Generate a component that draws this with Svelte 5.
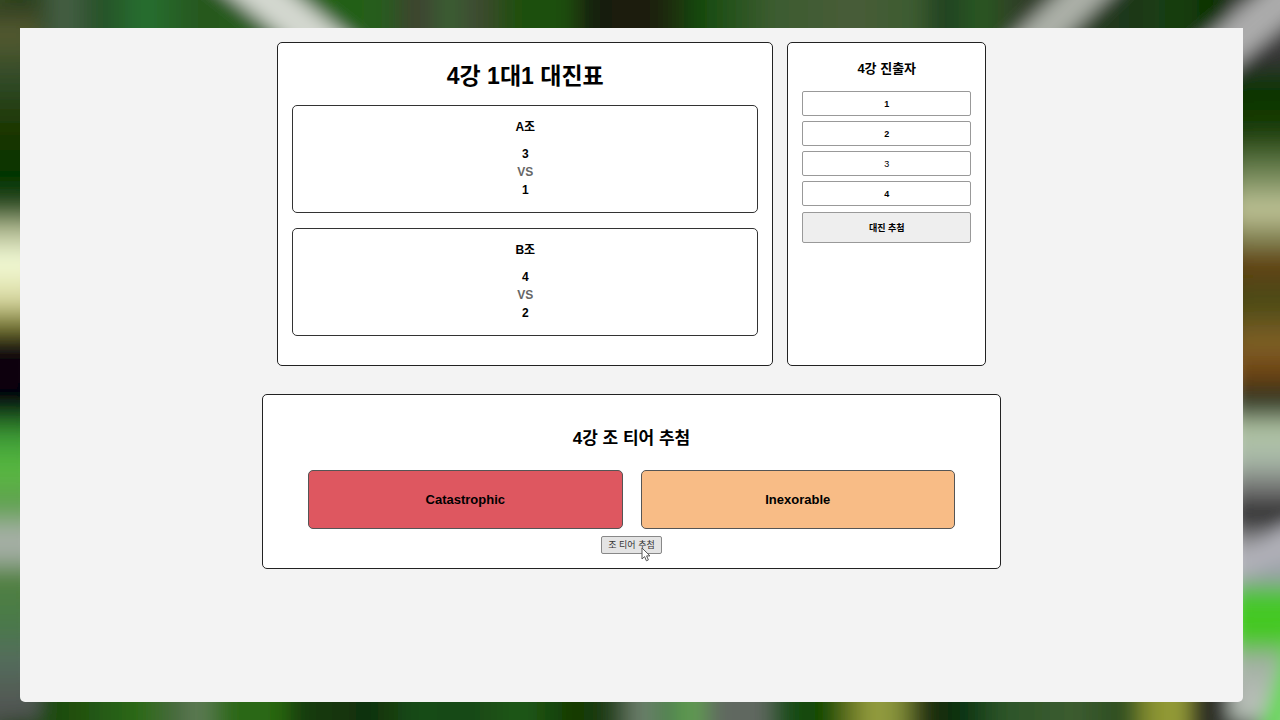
<script>
	// 4강 draw board: bracket, qualifiers and tier draw
	let players = $state([
		{ id: 1, name: '1', confirmed: true },
		{ id: 2, name: '2', confirmed: true },
		{ id: 3, name: '3', confirmed: false },
		{ id: 4, name: '4', confirmed: true }
	]);

	let groups = $state([
		{ title: 'A조', first: '3', second: '1' },
		{ title: 'B조', first: '4', second: '2' }
	]);

	let tiers = $state([
		{ name: 'Catastrophic', style: 'red' },
		{ name: 'Inexorable', style: 'orange' }
	]);

	// Backdrop colours as [position, colour] along each side
	const top = [
		[0, '#303818'], [20, '#506028'], [55, '#203c10'], [98, '#486048'], [130, '#285028'], [175, '#287030'],
		[220, '#285820'], [350, '#206010'], [400, '#285c20'], [430, '#404030'], [460, '#386030'], [485, '#404a34'],
		[530, '#1c5008'], [570, '#205008'], [592, '#182008'], [650, '#1c1c08'], [700, '#184c10'], [765, '#3c5c30'],
		[840, '#485c38'], [900, '#3c5c30'], [925, '#204020'], [960, '#2a5820'], [1000, '#303c28'], [1110, '#1c3818'],
		[1140, '#184010'], [1185, '#0c3000'], [1210, '#202c18'], [1280, '#303030']
	];
	const bottom = [
		[0, '#505050'], [30, '#405040'], [50, '#1c4010'], [110, '#205010'], [170, '#2c6a18'], [205, '#4a6a40'],
		[225, '#607c58'], [255, '#2c6818'], [300, '#286810'], [320, '#183c10'], [385, '#103008'], [430, '#184c18'],
		[480, '#184818'], [530, '#205818'], [580, '#103800'], [610, '#203c18'], [640, '#708070'], [665, '#508050'],
		[690, '#60a050'], [715, '#606860'], [755, '#606860'], [778, '#184c18'], [812, '#104800'], [835, '#607020'],
		[860, '#98a040'], [885, '#808c38'], [910, '#202c10'], [940, '#083010'], [980, '#2c5428'], [1050, '#3c5c30'],
		[1095, '#2c4c20'], [1120, '#889030'], [1150, '#98a038'], [1168, '#282820'], [1205, '#383c38'],
		[1240, '#c0c4c0'], [1262, '#b0c0b0'], [1280, '#60c050']
	];
	const left = [
		[0, '#2a3a20'], [33, '#555a30'], [80, '#304a28'], [130, '#1c3600'], [180, '#003400'], [203, '#2a4a20'],
		[230, '#b0b890'], [262, '#f4fcd8'], [300, '#d8d8a0'], [328, '#70702a'], [350, '#0a0510'], [400, '#050010'],
		[418, '#206020'], [440, '#40a038'], [470, '#58b840'], [505, '#60a050'], [535, '#a8b0a8'], [555, '#a0aca0'],
		[580, '#508040'], [620, '#4a7a48'], [660, '#546c5c'], [720, '#505050']
	];
	const right = [
		[0, '#505050'], [60, '#333333'], [90, '#083400'], [130, '#1a3c08'], [170, '#6a8050'], [210, '#c0c498'],
		[240, '#808050'], [265, '#604010'], [300, '#4a4a14'], [345, '#806028'], [375, '#6a4010'], [400, '#2e3420'],
		[430, '#b0c4a4'], [460, '#a8b8a8'], [490, '#707070'], [515, '#282828'], [550, '#b0b0b4'], [575, '#9a9faa'],
		[600, '#44c828'], [635, '#44c820'], [660, '#a0b0a0'], [700, '#b8bcb8'], [720, '#b0c0b0']
	];

	function shuffle(list) {
		return list
			.map((item) => ({ item, order: Math.random() }))
			.sort((a, b) => a.order - b.order)
			.map((entry) => entry.item);
	}

	function drawMatches() {
		const names = shuffle(players.map((player) => player.name));
		groups.forEach((group, i) => {
			group.first = names[i * 2];
			group.second = names[i * 2 + 1];
		});
	}

	function drawTiers() {
		tiers = shuffle(tiers);
	}
</script>

{#snippet gradient(id, stops, length, vertical)}
	<linearGradient {id} x1="0" y1="0" x2={vertical ? 0 : 1} y2={vertical ? 1 : 0}>
		{#each stops as [position, color]}
			<stop offset={position / length} stop-color={color} />
		{/each}
	</linearGradient>
{/snippet}

<div class="page">
	<svg class="backdrop" viewBox="0 0 1280 720" preserveAspectRatio="none" aria-hidden="true">
		<defs>
			{@render gradient('side-top', top, 1280, false)}
			{@render gradient('side-bottom', bottom, 1280, false)}
			{@render gradient('side-left', left, 720, true)}
			{@render gradient('side-right', right, 720, true)}
			<filter id="soft" filterUnits="userSpaceOnUse" x="-60" y="-60" width="1400" height="840">
				<feGaussianBlur stdDeviation="9" />
			</filter>
		</defs>
		<g filter="url(#soft)">
			<rect x="-40" y="-40" width="1360" height="400" fill="url(#side-top)" />
			<rect x="-40" y="680" width="1360" height="80" fill="url(#side-bottom)" />
			<rect x="-40" y="0" width="80" height="720" fill="url(#side-left)" />
			<rect x="1230" y="0" width="90" height="720" fill="url(#side-right)" />
			<path d="M218 -40 L345 60" stroke="#d4d8d0" stroke-width="40" />
			<path d="M1120 -40 L1015 60" stroke="#acb0a8" stroke-width="36" />
			<path d="M1330 -40 L1205 65" stroke="#acacac" stroke-width="40" />
			<path d="M1300 530 L1235 572" stroke="#b0b0b8" stroke-width="24" />
			<path d="M1270 740 L1300 640" stroke="#60d850" stroke-width="24" />
		</g>
	</svg>

	<main>
		<div class="top-row">
			<section class="panel bracket">
				<h1>4강 1대1 대진표</h1>
				{#each groups as group (group.title)}
					<article class="group">
						<h2>{group.title}</h2>
						<p>{group.first}</p>
						<p class="versus">VS</p>
						<p>{group.second}</p>
					</article>
				{/each}
			</section>

			<section class="panel qualifiers">
				<h2>4강 진출자</h2>
				{#each players as player (player.id)}
					<input
						type="text"
						class:pending={!player.confirmed}
						aria-label="진출자 {player.id}"
						bind:value={player.name}
					/>
				{/each}
				<button type="button" class="match-btn" onclick={drawMatches}>대진 추첨</button>
			</section>
		</div>

		<section class="panel tier-panel">
			<h2>4강 조 티어 추첨</h2>
			<div class="tiers">
				{#each tiers as tier (tier.name)}
					<div class="tier {tier.style}">{tier.name}</div>
				{/each}
			</div>
			<button type="button" class="tier-btn" onclick={drawTiers}>
				조 티어 추첨
				<svg class="cursor" viewBox="0 0 10 15" aria-hidden="true">
					<path d="M1 1 V12 L3.600 9.600 L5.400 13.800 L7.400 12.900 L5.600 8.900 H9 Z" />
				</svg>
			</button>
		</section>
	</main>
</div>

<style>
	:global(body) {
		margin: 0;
	}

	.page {
		position: relative;
		box-sizing: border-box;
		display: flex;
		min-height: 100vh;
		padding: 28px 37px 18px 20px;
		font-family: 'Liberation Sans', 'Noto Sans CJK KR', sans-serif;
		color: #000;
	}

	.backdrop {
		position: absolute;
		inset: 0;
		width: 100%;
		height: 100%;
	}

	main {
		position: relative;
		box-sizing: border-box;
		flex: 1;
		display: flex;
		flex-direction: column;
		align-items: center;
		gap: 28px;
		padding: 14px;
		background: #f3f3f3;
		border-radius: 0 0 5px 5px;
	}

	.top-row {
		display: flex;
		gap: 14px;
		width: 100%;
		max-width: 709px;
	}

	.panel {
		box-sizing: border-box;
		padding: 14px;
		background: #fff;
		border: 1px solid #222;
		border-radius: 5px;
		text-align: center;
	}

	h1,
	h2,
	p {
		margin: 0;
	}

	.bracket {
		flex: 1;
	}

	h1 {
		margin-bottom: 10px;
		font-size: 23px;
		line-height: 38px;
	}

	.group {
		margin-bottom: 15px;
		padding: 12px 12px 13px;
		border: 1px solid #333;
		border-radius: 5px;
	}

	.group h2 {
		margin-bottom: 9px;
		font-size: 12px;
		line-height: 18px;
	}

	.group p {
		font-size: 12px;
		font-weight: bold;
		line-height: 18px;
	}

	.group .versus {
		color: #666;
	}

	.qualifiers {
		flex: none;
		width: 28%;
		display: flex;
		flex-direction: column;
		gap: 5px;
	}

	.qualifiers h2 {
		margin-bottom: 5px;
		font-size: 13px;
		line-height: 24px;
	}

	input {
		box-sizing: border-box;
		width: 100%;
		height: 25px;
		padding: 0 4px;
		background: #fff;
		border: 1px solid #999;
		border-radius: 2px;
		font: bold 9px 'Liberation Sans', sans-serif;
		text-align: center;
	}

	input.pending {
		font-weight: normal;
	}

	button {
		background: #eee;
		border: 1px solid #999;
		border-radius: 2px;
		font-family: inherit;
		font-size: 9px;
		color: #000;
	}

	.match-btn {
		height: 31px;
		margin-top: 1px;
		font-weight: bold;
	}

	.tier-panel {
		width: 100%;
		max-width: 739px;
		padding: 29px 45px 14px;
	}

	.tier-panel h2 {
		margin-bottom: 16px;
		font-size: 17px;
		line-height: 30px;
	}

	.tiers {
		display: flex;
		gap: 18px;
		margin-bottom: 7px;
	}

	.tier {
		flex: 1;
		border: 1px solid #555;
		border-radius: 5px;
		font-size: 13px;
		font-weight: bold;
		line-height: 57px;
	}

	.red {
		background: #de5760;
	}

	.orange {
		background: #f8bc86;
	}

	.tier-btn {
		position: relative;
		display: block;
		margin: 0 auto;
		padding: 0 6px;
		background: #e4e4e4;
		border-color: #888;
		line-height: 16px;
		color: #333;
	}

	.cursor {
		position: absolute;
		top: 10px;
		right: 10px;
		width: 10px;
		height: 15px;
		fill: #fff;
		stroke: #555;
	}
</style>
